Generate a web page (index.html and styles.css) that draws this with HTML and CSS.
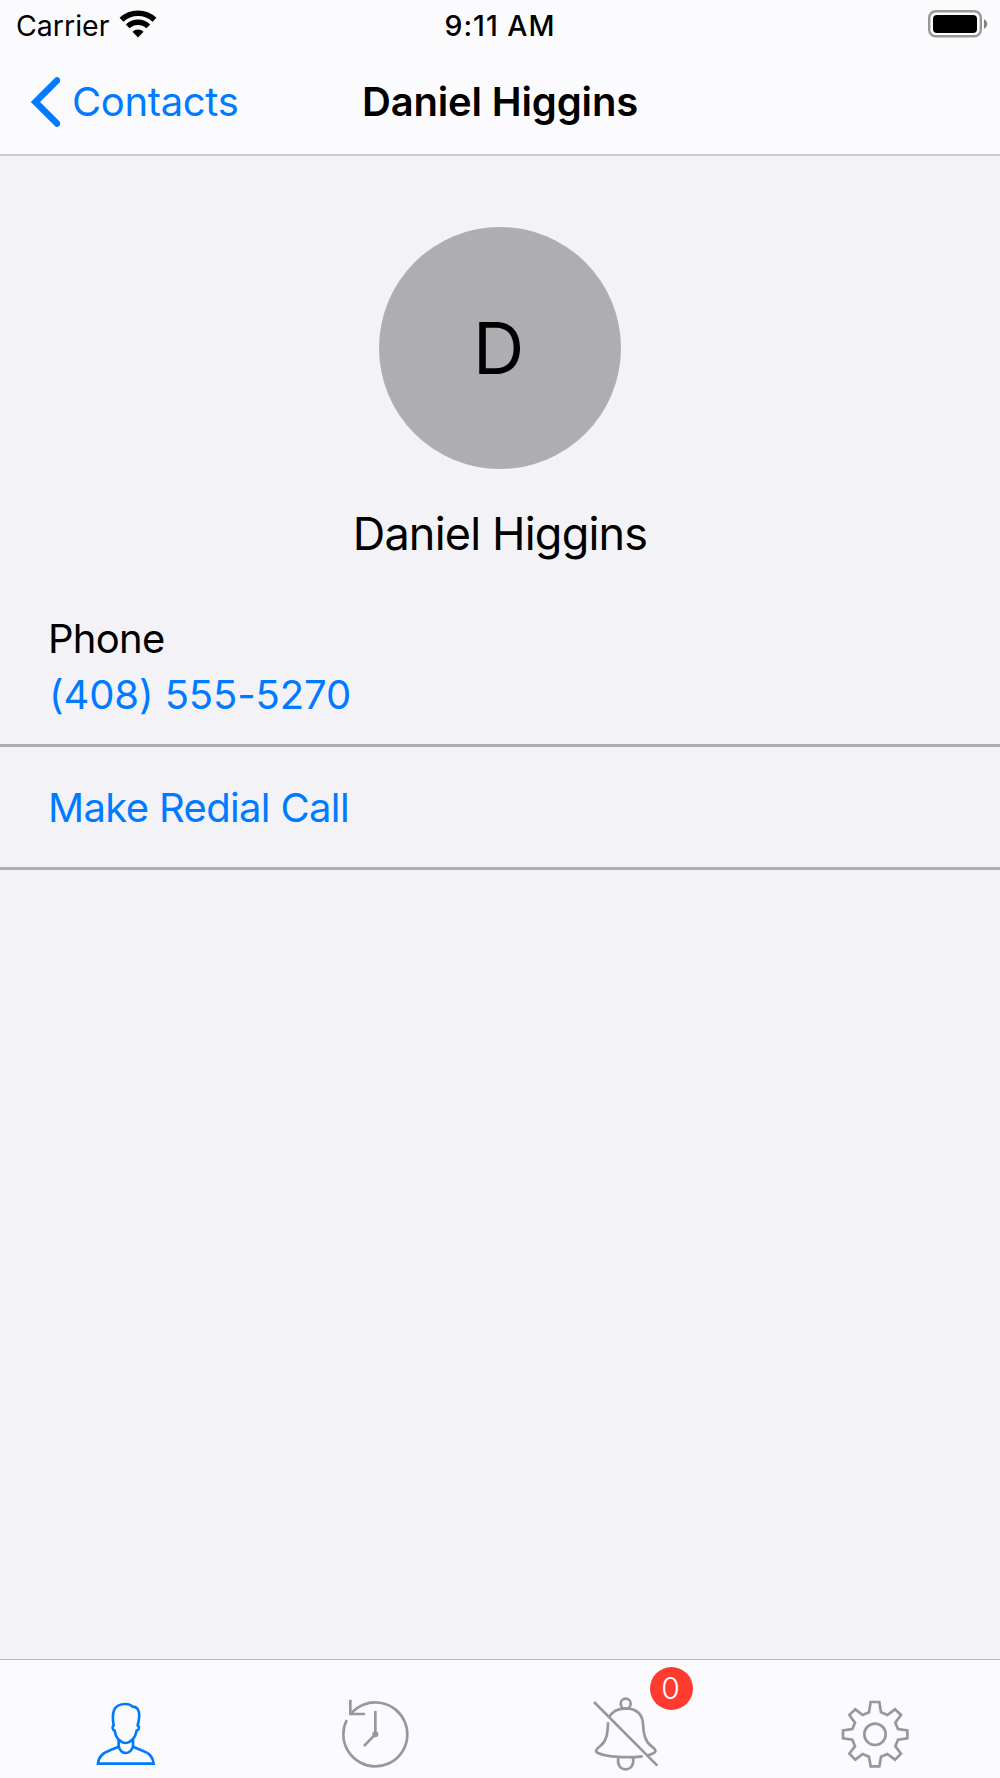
FILE: index.html
```html
<!DOCTYPE html>
<html lang="en">
<head>
    <meta charset="UTF-8">
    <meta name="viewport" content="width=device-width, initial-scale=1.0">
    <title>Daniel Higgins</title>
    <link rel="stylesheet" href="styles.css">
</head>
<body>

<header>
    <div class="status-bar">
        <div class="carrier">
            <span>Carrier</span>
            <svg class="wifi" width="38" height="28" viewBox="0 0 38 28">
                <path d="M2.5 9.8 A24 24 0 0 1 35.5 9.8" fill="none" stroke="#000" stroke-width="5.6"/>
                <path d="M8.7 16.4 A15 15 0 0 1 29.3 16.4" fill="none" stroke="#000" stroke-width="5.4"/>
                <path d="M19 27.5 L13.4 21.8 A8.2 8.2 0 0 1 24.6 21.8 Z"/>
            </svg>
        </div>
        <div class="time">9:11 AM</div>
        <svg class="battery" width="60" height="28" viewBox="0 0 60 28">
            <rect x="1.2" y="1.2" width="51.6" height="25" rx="6.5" fill="#fff" stroke="#98989a" stroke-width="2.4"/>
            <rect x="5" y="5" width="44" height="18" rx="4"/>
            <path d="M56 9.2 A5.3 5.3 0 0 1 56 18.8 Z" fill="#7f7f81"/>
        </svg>
    </div>
    <nav class="nav-bar">
        <a class="back">
            <svg width="30" height="52" viewBox="0 0 30 52">
                <path d="M27 4.5 L5.5 26 L27 47.5" fill="none" stroke="#007aff" stroke-width="6.6" stroke-linecap="round"/>
            </svg>
            <span>Contacts</span>
        </a>
        <h1>Daniel Higgins</h1>
    </nav>
</header>

<main>
    <div class="avatar">D</div>
    <h2>Daniel Higgins</h2>
    <div class="row phone">
        <div class="label">Phone</div>
        <a class="number">(408) 555-5270</a>
    </div>
    <div class="row redial">
        <a>Make Redial Call</a>
    </div>
</main>

<footer class="tab-bar">
    <!-- contacts -->
    <a class="tab active">
        <svg width="80" height="83" viewBox="15 135 240 249">
            <path d="M114 267 C107 258 105 251 104 242 C98 240 95 230 101 226 C95 190 98 162 137 162 C147 162 153 165 158 170 C182 171 180 200 173 226 C180 231 176 241 170 242 C168 252 166 259 159 267 C151 275 146 279 137 279 C128 279 122 275 114 267 Z"/>
            <path d="M116 268 V289 C121 305 128 309 137 309 C147 309 154 304 159 289 V268"/>
            <path d="M116 290 L90 301 C67 310 56 320 54 341 H221 C218 319 208 309 184 301 L159 290"/>
        </svg>
    </a>
    <!-- history -->
    <a class="tab">
        <svg width="80" height="83" viewBox="30 135 240 249">
            <path d="M65.2 210 A96 96 0 1 0 78.6 190"/>
            <path d="M76 149 V192 H120"/>
            <path d="M151 183 V253 L117 288"/>
            <circle class="dot" cx="151" cy="253" r="9"/>
        </svg>
    </a>
    <!-- muted notifications -->
    <a class="tab">
        <svg width="80" height="83" viewBox="15 135 240 249">
            <circle cx="137" cy="161" r="15"/>
            <path d="M87 203 C95 185 111 176 137 175 C169 176 187 192 189 221 C191 256 196 276 216 290 C225 297 230 302 223 308 C218 311 212 314 203 316"/>
            <path d="M84 217 C83 252 80 273 61 288 C48 297 44 304 54 309 C80 322 145 324 188 319"/>
            <path d="M115 323 C111 344 121 358 137 358 C153 358 163 344 159 323"/>
            <path d="M42 156 L232 347"/>
        </svg>
        <span class="badge">0</span>
    </a>
    <!-- settings -->
    <a class="tab">
        <svg width="80" height="83" viewBox="30 135 240 249">
            <path d="M137 156 H163 L168 187 L187 195 L210 178 L228 195 L211 218 L219 237 L247 241 V265 L219 269 L211 289 L228 311 L210 329 L187 312 L168 320 L163 349 H137 L132 320 L113 312 L91 329 L73 311 L90 289 L82 269 L54 265 V241 L82 237 L90 218 L73 195 L91 178 L113 195 L132 187 Z"/>
            <circle cx="150" cy="253" r="32"/>
        </svg>
    </a>
</footer>

</body>
</html>
```

FILE: styles.css
```css
* {
    box-sizing: border-box;
}
body {
    margin: 0;
    height: 1778px;
    display: flex;
    flex-direction: column;
    overflow: hidden;
    background-color: #f2f2f7;
    color: #000;
    font-family: Inter, "Liberation Sans", sans-serif;
    font-size: 40px;
}
header {
    height: 156px;
    background-color: #fbfbfd;
    border-bottom: 2px solid #cbcbcf;
}
a {
    color: #007aff;
}
.status-bar {
    height: 50px;
    display: grid;
    grid-template-columns: 1fr auto 1fr;
    align-items: center;
    padding: 0 12px;
    font-size: 28.5px;
}
.carrier {
    display: flex;
    align-items: center;
    gap: 10px;
    padding-left: 4px;
}
.wifi {
    margin-bottom: 3px;
}
.time {
    font-weight: 500;
    letter-spacing: 1px;
}
.battery {
    justify-self: end;
    margin-bottom: 2px;
}
.nav-bar {
    height: 104px;
    display: grid;
    grid-template-columns: 1fr auto 1fr;
    align-items: center;
    padding: 0 30px;
}
.back {
    display: flex;
    align-items: center;
    gap: 12px;
    letter-spacing: -0.35px;
}
.back span {
    margin-bottom: 2px;
}
h1, h2 {
    margin: 0;
}
h1 {
    margin-bottom: 2px;
    font-size: 40px;
    font-weight: 600;
    letter-spacing: -0.15px;
}
main {
    flex: 1;
}
.avatar {
    width: 242px;
    height: 242px;
    margin: 71px auto 0;
    padding-right: 3px;
    border-radius: 50%;
    background-color: #aeaeb2;
    display: flex;
    align-items: center;
    justify-content: center;
    font-size: 71px;
}
h2 {
    margin-top: 37px;
    line-height: 56px;
    font-size: 45px;
    font-weight: 400;
    letter-spacing: -0.8px;
    text-align: center;
}
.row {
    padding-left: 48px;
    border-bottom: 3px solid #adadb0;
}
.phone {
    height: 185px;
    padding-top: 49px;
    line-height: 56px;
}
.label {
    letter-spacing: -0.7px;
}
.number {
    display: block;
    padding-left: 1px;
    letter-spacing: -0.1px;
}
.redial {
    height: 123px;
    line-height: 121px;
    letter-spacing: -0.65px;
}
.tab-bar {
    height: 119px;
    display: grid;
    grid-template-columns: repeat(4, 1fr);
    background-color: #fbfbfd;
    border-top: 1px solid #b9b9bd;
}
.tab {
    position: relative;
    display: flex;
    justify-content: center;
    align-items: flex-end;
    color: #98989b;
}
.tab svg {
    fill: none;
    stroke: currentColor;
    stroke-width: 8;
}
.tab .dot {
    fill: currentColor;
    stroke: none;
}
.active {
    color: #007aff;
}
.badge {
    position: absolute;
    top: 7px;
    left: 150px;
    width: 43px;
    height: 43px;
    padding-right: 2px;
    border-radius: 50%;
    background-color: #ff3b30;
    color: #fff;
    font-size: 30px;
    font-weight: 300;
    line-height: 42px;
    text-align: center;
}
```
